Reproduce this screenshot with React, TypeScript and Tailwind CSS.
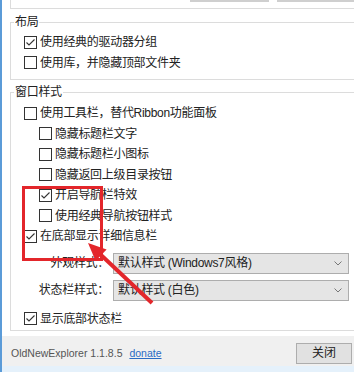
import React from "react";

const Box = ({ checked }: { checked?: boolean }) => (
  <span className="flex h-[13px] w-[13px] shrink-0 items-center justify-center border border-[#333] bg-white">
    {checked && (
      <svg width="11" height="11" viewBox="0 0 11 11">
        <polyline points="1.5,5.5 4,8 9.5,2.5" fill="none" stroke="#333" strokeWidth="1.1" />
      </svg>
    )}
  </span>
);

const CheckRow = ({
  label,
  checked,
  sub,
}: {
  label: string;
  checked?: boolean;
  sub?: boolean;
}) => (
  <div className={`flex h-[20.5px] items-center gap-[3px] ${sub ? "pl-[28px]" : "pl-[13px]"}`}>
    <Box checked={checked} />
    <span className="whitespace-nowrap text-[12px] leading-[16px] tracking-[-0.3px] text-[#222]">{label}</span>
  </div>
);

const Select = ({ label, value }: { label: string; value: string }) => (
  <div className="flex h-[21px] items-center">
    <span className="w-[98px] whitespace-nowrap text-right text-[12px] leading-[16px] tracking-[-0.3px] text-[#222]">
      {label}
    </span>
    <div className="ml-[4px] flex h-[21px] w-[236px] items-center justify-between border border-[#adadad] bg-[#e5e5e5] pl-[4px] pr-[6px]">
      <span className="whitespace-nowrap text-[12px] leading-[16px] tracking-[-0.3px] text-[#222]">{value}</span>
      <svg width="8" height="5" viewBox="0 0 8 5">
        <polyline points="0.5,0.5 4,4 7.5,0.5" fill="none" stroke="#777" strokeWidth="1" />
      </svg>
    </div>
  </div>
);

export default function App() {
  return (
    <div
      className="relative flex h-[372px] w-[354px] flex-col overflow-hidden border-l-2 border-[#5b9bd8] bg-white"
      style={{ fontFamily: '"Liberation Sans", "Noto Sans CJK SC", sans-serif' }}
    >
      {/* bottom of the group above */}
      <div className="ml-[8px] h-[9px] w-[360px] shrink-0 border-b border-l border-[#dcdcdc]">
        <div className="flex h-[2px]">
          <div className="ml-[179px] w-[79px] bg-[#cfcfcf]" />
          <div className="ml-[8px] flex-1 bg-[#cfcfcf]" />
        </div>
      </div>

      {/* 布局 */}
      <fieldset className="ml-[8px] mt-[5px] w-[360px] shrink-0 border border-[#dcdcdc] pb-[6px] pt-[2px]">
        <legend className="ml-[3px] px-[1px] text-[12px] leading-[16px] tracking-[-0.3px] text-[#222]">布局</legend>
        <CheckRow label="使用经典的驱动器分组" checked />
        <CheckRow label="使用库，并隐藏顶部文件夹" />
      </fieldset>

      {/* 窗口样式 */}
      <fieldset className="ml-[8px] mt-[4px] w-[360px] shrink-0 border border-[#dcdcdc] pb-[1px] pt-[3px]">
        <legend className="ml-[3px] px-[1px] text-[12px] leading-[16px] tracking-[-0.3px] text-[#222]">窗口样式</legend>
        <CheckRow label="使用工具栏，替代Ribbon功能面板" />
        <CheckRow label="隐藏标题栏文字" sub />
        <CheckRow label="隐藏标题栏小图标" sub />
        <CheckRow label="隐藏返回上级目录按钮" sub />
        <CheckRow label="开启导航栏特效" sub checked />
        <CheckRow label="使用经典导航按钮样式" sub />
        <CheckRow label="在底部显示详细信息栏" checked />
        <div className="mt-[6px] flex flex-col gap-[6px]">
          <Select label="外观样式：" value="默认样式 (Windows7风格)" />
          <Select label="状态栏样式：" value="默认样式 (白色)" />
        </div>
        <div className="mt-[8px]">
          <CheckRow label="显示底部状态栏" checked />
        </div>
      </fieldset>

      {/* footer */}
      <div className="mt-[5px] flex h-[30px] shrink-0 items-center justify-between bg-[#f0f0f0] pl-[9px] pr-[2px] pt-[4px]">
        <span className="whitespace-nowrap text-[10.5px] leading-[16px] text-[#555]">
          OldNewExplorer 1.1.8.5{" "}
          <span className="ml-[4px] text-[#2a6bc4] underline">donate</span>
        </span>
        <button className="h-[21px] w-[56px] border border-[#adadad] bg-[#e1e1e1] text-[12px] leading-[16px] text-[#222]">
          关闭
        </button>
      </div>
      <div className="h-[3px] flex-1 bg-[#e5f1fb]" />

      {/* annotation overlay */}
      <div className="pointer-events-none absolute left-[20px] top-[186px] h-[75px] w-[81px] border-[3px] border-[#e3262b]" />
      <svg className="pointer-events-none absolute left-0 top-0" width="354" height="372">
        <line x1="99" y1="255" x2="150" y2="303" stroke="#e3262b" strokeWidth="4" />
        <polygon points="86,243 104.6,249.5 93.6,261.1" fill="#e3262b" />
      </svg>
    </div>
  );
}
